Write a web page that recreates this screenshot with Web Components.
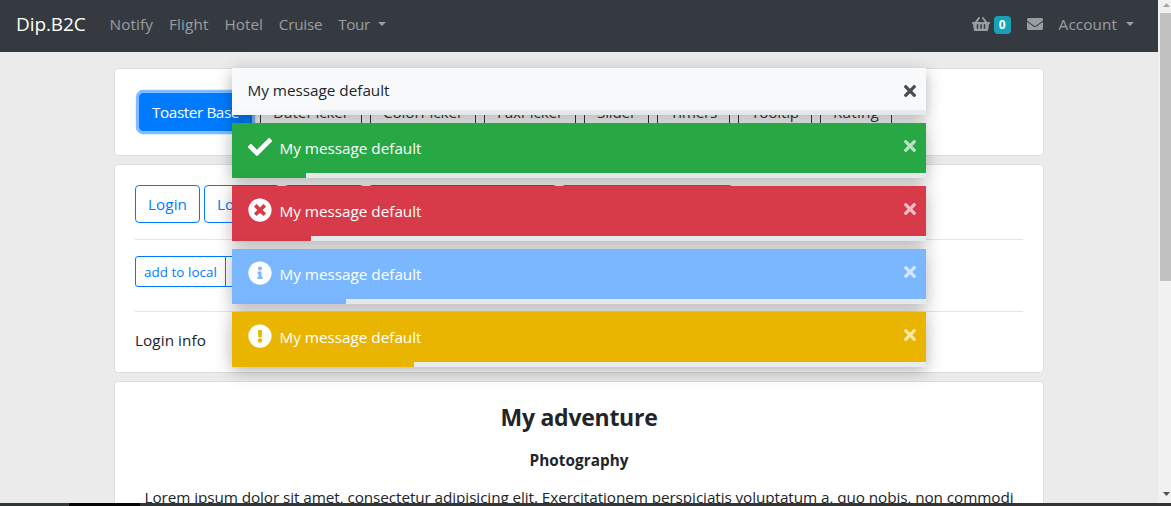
<!DOCTYPE html>
<html lang="en">
<head>
<meta charset="utf-8">
<title>Dip.B2C</title>
<style>
html,body{margin:0;height:100%;overflow:hidden}
body{font:15.3px/24px "Open Sans","Noto Sans",sans-serif;color:#212529;background:#ebebeb}
</style>
</head>
<body>
<app-shell>
  <nav-bar slot="nav">
    <fit-text slot="brand" w="69.6">Dip.B2C</fit-text>
    <nav-item><fit-text w="43.3">Notify</fit-text></nav-item>
    <nav-item><fit-text w="39.7">Flight</fit-text></nav-item>
    <nav-item><fit-text w="38.2">Hotel</fit-text></nav-item>
    <nav-item><fit-text w="43.5">Cruise</fit-text></nav-item>
    <nav-item caret><fit-text w="31.5">Tour</fit-text></nav-item>
    <nav-item slot="end"><fa-icon name="basket" style="width:18px;height:16px"></fa-icon><count-badge>0</count-badge></nav-item>
    <nav-item slot="end"><fa-icon name="envelope" style="width:16px;height:16px"></fa-icon></nav-item>
    <nav-item slot="end" caret><fit-text w="58.5">Account</fit-text></nav-item>
  </nav-bar>

  <content-card style="height:46px">
    <button-row style="--gap:8px;padding:4px">
      <ui-button variant="primary" style="width:113px"><fit-text w="87">Toaster Base</fit-text></ui-button>
      <ui-button variant="dark" style="width:102px"><fit-text w="76">DatePicker</fit-text></ui-button>
      <ui-button variant="dark" style="width:106px"><fit-text w="80">ColorPicker</fit-text></ui-button>
      <ui-button variant="dark" style="width:92px"><fit-text w="66">FaxPicker</fit-text></ui-button>
      <ui-button variant="dark" style="width:65px"><fit-text w="39">Slider</fit-text></ui-button>
      <ui-button variant="dark" style="width:73px"><fit-text w="47">Timers</fit-text></ui-button>
      <ui-button variant="dark" style="width:74px"><fit-text w="48">Tooltip</fit-text></ui-button>
      <ui-button variant="dark" style="width:72px"><fit-text w="46">Rating</fit-text></ui-button>
    </button-row>
  </content-card>

  <content-card style="height:167px">
    <button-row style="--gap:4px">
      <ui-button style="width:65px"><fit-text w="39">Login</fit-text></ui-button>
      <ui-button style="width:76px"><fit-text w="50">Logout</fit-text></ui-button>
      <ui-button style="width:80px"></ui-button>
      <ui-button style="width:189px"></ui-button>
      <ui-button variant="secondary" style="width:172px"></ui-button>
    </button-row>
    <rule-line></rule-line>
    <button-row style="--gap:0px">
      <ui-button small joined="start" style="width:91px"><fit-text w="73">add to local</fit-text></ui-button>
      <ui-button small joined="end" style="width:90px;margin-left:-1px"></ui-button>
    </button-row>
    <rule-line style="margin-top:24px"></rule-line>
    <fit-text w="71">Login info</fit-text>
  </content-card>

  <content-card style="height:300px">
    <article-block>
      <fit-text slot="title" w="157">My adventure</fit-text>
      <fit-text slot="subtitle" w="99">Photography</fit-text>
      <fit-text w="869">Lorem ipsum dolor sit amet, consectetur adipisicing elit. Exercitationem perspiciatis voluptatum a, quo nobis, non commodi</fit-text>
    </article-block>
  </content-card>

  <toast-item slot="toasts" kind="light" style="--fill:88px"><fit-text w="142">My message default</fit-text></toast-item>
  <toast-item slot="toasts" kind="success" icon="check" style="--fill:74px"><fit-text w="142">My message default</fit-text></toast-item>
  <toast-item slot="toasts" kind="danger" icon="timesCircle" style="--fill:79px"><fit-text w="142">My message default</fit-text></toast-item>
  <toast-item slot="toasts" kind="info" icon="infoCircle" style="--fill:114px"><fit-text w="142">My message default</fit-text></toast-item>
  <toast-item slot="toasts" kind="warning" icon="exclamationCircle" style="--fill:182px"><fit-text w="142">My message default</fit-text></toast-item>
</app-shell>

<script>
const define = (name, html, ready) => {
  const template = document.createElement('template');
  template.innerHTML = html;
  customElements.define(name, class extends HTMLElement {
    constructor() {
      super();
      this.attachShadow({mode: 'open'}).append(template.content.cloneNode(true));
    }
    connectedCallback() { if (ready) ready(this, this.shadowRoot); }
  });
};

const ICONS = {
  check: ['0 0 512 512', 'M173.898 439.404l-166.4-166.4c-9.997-9.997-9.997-26.206 0-36.204l36.203-36.204c9.997-9.998 26.207-9.998 36.204 0L192 312.69 432.095 72.596c9.997-9.997 26.207-9.997 36.204 0l36.203 36.204c9.997 9.997 9.997 26.206 0 36.204l-294.4 294.401c-9.998 9.997-26.207 9.997-36.204-.001z'],
  timesCircle: ['0 0 512 512', 'M256 8C119 8 8 119 8 256s111 248 248 248 248-111 248-248S393 8 256 8zm121.6 313.1c4.7 4.7 4.7 12.3 0 17L338 377.6c-4.7 4.7-12.3 4.7-17 0L256 312l-65.1 65.6c-4.7 4.7-12.3 4.7-17 0L134.4 338c-4.7-4.7-4.7-12.3 0-17l65.6-65-65.6-65.1c-4.7-4.7-4.7-12.3 0-17l39.6-39.6c4.7-4.7 12.3-4.7 17 0l65 65.7 65.1-65.6c4.7-4.7 12.3-4.7 17 0l39.6 39.6c4.7 4.7 4.7 12.3 0 17L312 256l65.6 65.1z'],
  infoCircle: ['0 0 512 512', 'M256 8C119.043 8 8 119.083 8 256c0 136.997 111.043 248 248 248s248-111.003 248-248C504 119.083 392.957 8 256 8zm0 110c23.196 0 42 18.804 42 42s-18.804 42-42 42-42-18.804-42-42 18.804-42 42-42zm56 254c0 6.627-5.373 12-12 12h-88c-6.627 0-12-5.373-12-12v-24c0-6.627 5.373-12 12-12h12v-64h-12c-6.627 0-12-5.373-12-12v-24c0-6.627 5.373-12 12-12h64c6.627 0 12 5.373 12 12v100h12c6.627 0 12 5.373 12 12v24z'],
  exclamationCircle: ['0 0 512 512', 'M504 256c0 136.997-111.043 248-248 248S8 392.997 8 256C8 119.083 119.043 8 256 8s248 111.083 248 248zm-248 50c-25.405 0-46 20.595-46 46s20.595 46 46 46 46-20.595 46-46-20.595-46-46-46zm-43.673-165.346l7.418 136c.347 6.364 5.609 11.346 11.982 11.346h48.546c6.373 0 11.635-4.982 11.982-11.346l7.418-136c.375-6.874-5.098-12.654-11.982-12.654h-63.383c-6.884 0-12.356 5.78-11.981 12.654z'],
  times: ['0 80 352 352', 'M242.72 256l100.07-100.07c12.28-12.28 12.28-32.19 0-44.48l-22.24-22.24c-12.28-12.28-32.19-12.28-44.48 0L176 189.28 75.93 89.21c-12.28-12.28-32.19-12.28-44.48 0L9.21 111.45c-12.28 12.28-12.28 32.19 0 44.48L109.28 256 9.21 356.07c-12.28 12.28-12.28 32.19 0 44.48l22.24 22.24c12.28 12.28 32.2 12.28 44.48 0L176 322.72l100.07 100.07c12.28 12.28 32.2 12.28 44.48 0l22.24-22.24c12.28-12.28 12.28-32.19 0-44.48L242.72 256z'],
  envelope: ['0 0 512 512', 'M502.3 190.8c3.9-3.1 9.7-.2 9.7 4.7V400c0 26.5-21.5 48-48 48H48c-26.5 0-48-21.5-48-48V195.6c0-5 5.7-7.8 9.7-4.7 22.4 17.4 52.1 39.5 154.1 113.6 21.1 15.4 56.7 47.8 92.2 47.6 35.7.3 72-32.8 92.3-47.6 102-74.1 131.6-96.3 154-113.7zM256 320c23.2.4 56.6-29.2 73.4-41.4 132.7-96.3 142.8-104.7 173.4-128.7 5.8-4.5 9.2-11.5 9.2-18.9v-19c0-26.5-21.5-48-48-48H48c-26.5 0-48 21.5-48 48v19c0 7.4 3.4 14.3 9.2 18.9 30.6 23.9 40.7 32.4 173.4 128.7 16.8 12.2 50.2 41.8 73.4 41.4z'],
  basket: ['0 0 576 512', 'M576 216v16c0 13.255-10.745 24-24 24h-8l-26.113 182.788C514.509 462.435 494.257 480 470.37 480H105.63c-23.887 0-44.139-17.565-47.518-41.212L32 256h-8c-13.255 0-24-10.745-24-24v-16c0-13.255 10.745-24 24-24h67.341l106.78-146.821c10.395-14.292 30.407-17.453 44.701-7.058 14.293 10.395 17.453 30.408 7.058 44.701L170.477 192h235.046L326.12 82.821c-10.395-14.292-7.234-34.306 7.059-44.701 14.291-10.395 34.306-7.235 44.701 7.058L484.659 192H552c13.255 0 24 10.745 24 24zM312 392V280c0-13.255-10.745-24-24-24s-24 10.745-24 24v112c0 13.255 10.745 24 24 24s24-10.745 24-24zm112 0V280c0-13.255-10.745-24-24-24s-24 10.745-24 24v112c0 13.255 10.745 24 24 24s24-10.745 24-24zm-224 0V280c0-13.255-10.745-24-24-24s-24 10.745-24 24v112c0 13.255 10.745 24 24 24s24-10.745 24-24z']
};

define('app-shell', `
<style>
:host{display:grid;grid-template-columns:1fr 13px;grid-template-rows:503px 3px;height:506px;position:relative;overflow:hidden}
.view{overflow:hidden;position:relative}
main{width:930px;margin:16px 0 0 114px;display:flex;flex-direction:column;gap:8px}
.toasts{position:absolute;left:232px;top:68px;width:694px;display:flex;flex-direction:column;gap:8px}
.edge{grid-column:1/3;background:linear-gradient(90deg,#333637 69px,#060606 69px 140px,#333637 140px 500px,#353233)}
</style>
<div class="view"><slot name="nav"></slot><main><slot></slot></main><div class="toasts"><slot name="toasts"></slot></div></div>
<scroll-track></scroll-track><div class="edge"></div>`);

define('scroll-track', `
<style>
:host{display:flex;flex-direction:column;background:#f1f1f1;padding-left:2px}
svg{display:block;width:11px}
.thumb{height:268px;background:#c1c1c1}
.rest{flex:1}
</style>
<svg height="13" viewBox="0 0 11 13"><path d="M3 7L6.5 3.2L10 7z" fill="#a3a3a3"/></svg>
<div class="thumb"></div><div class="rest"></div>
<svg height="13" viewBox="0 0 11 13"><path d="M3 2L6.5 6L10 2z" fill="#505050"/></svg>`);

define('nav-bar', `
<style>
:host{display:flex;align-items:center;height:52px;box-sizing:border-box;padding:0 16px 4px;background:#343a40;color:rgba(255,255,255,.5)}
.brand{color:#fff;font-size:19px;line-height:30px;margin-right:16px}
.group{display:flex}
.end{margin-left:auto}
</style>
<div class="brand"><slot name="brand"></slot></div>
<div class="group"><slot></slot></div><div class="group end"><slot name="end"></slot></div>`);

define('nav-item', `
<style>
:host{display:flex;align-items:center;padding:0 8px;height:40px}
i{display:none;margin-left:8.5px;border:4.8px solid transparent;border-top-color:currentColor;border-bottom:0;margin-top:-1px}
:host([caret]) i{display:block}
:host([caret][slot=end]){padding-right:8.4px}
</style><slot></slot><i></i>`);

define('count-badge', `
<style>
:host{display:block;width:17px;height:18px;margin:2px 0 0 4px;border-radius:4px;background:#17a2b8;color:#fff;font-size:12px;font-weight:700;line-height:18px;text-align:center}
</style><slot></slot>`);

define('fa-icon', `
<style>:host{display:block}svg{display:block;width:100%;height:100%}</style><svg><path fill="currentColor"/></svg>`,
(el, root) => {
  const icon = ICONS[el.getAttribute('name')];
  if (!icon) return;
  root.querySelector('svg').setAttribute('viewBox', icon[0]);
  root.querySelector('path').setAttribute('d', icon[1]);
});

define('content-card', `
<style>:host{display:block;padding:20px;border:1px solid #dedede;border-radius:4px;background:#fff}</style><slot></slot>`);

define('button-row', `<style>:host{display:flex;gap:var(--gap)}</style><slot></slot>`);

define('ui-button', `
<style>
:host{display:flex;align-items:center;justify-content:center;box-sizing:border-box;flex:none;height:38px;border:1px solid;border-radius:4px;color:#007bff}
:host([variant=primary]){background:#007bff;border-color:#007bff;color:#fff;box-shadow:0 0 0 3.2px #80bdff}
:host([variant=dark]){color:#343a40}
:host([variant=secondary]){color:#6c757d}
:host([small]){height:31px;font-size:13.4px}
:host([joined=start]){border-radius:3px 0 0 3px}
:host([joined=end]){border-radius:0 3px 3px 0}
</style><slot></slot>`);

define('rule-line', `<style>:host{display:block;height:1px;margin:16px 0;background:#e5e5e5}</style>`);

define('article-block', `
<style>
:host{display:block;text-align:center}
.title{font-size:23px;font-weight:700;line-height:32px;margin-top:-1px}
.sub{font-weight:700;line-height:24px;margin-top:15px}
.copy{margin-top:13px;white-space:nowrap}
</style>
<div class="title"><slot name="title"></slot></div><div class="sub"><slot name="subtitle"></slot></div><div class="copy"><slot></slot></div>`);

define('toast-item', `
<style>
:host{display:block;height:55px;box-shadow:0 4px 16px rgba(0,0,0,.3);color:#fff;--bg:#28a745}
:host([kind=light]){height:47px;color:#212529;--bg:#f8f9fa}
:host([kind=danger]){--bg:#d73a49}
:host([kind=info]){--bg:#7ab7ff}
:host([kind=warning]){--bg:#e9b500}
.body{display:flex;align-items:flex-start;height:50px;background:var(--bg);padding:0 10px 0 16px;box-sizing:border-box}
:host([kind=light]) .body{height:42px}
.icon{width:24px;height:24px;margin:12px 8px 0 0}
:host([kind=light]) .icon{display:none}
.text{margin:13px 0 0 -.5px}
:host([kind=light]) .text{margin-top:10px}
.close{width:12px;height:12px;margin:17px 0 0 auto;opacity:.68}
:host([kind=light]) .close{opacity:.8;color:#212121}
.bar{height:5px;background:#e9ecef}
.bar div{height:5px;width:var(--fill);background:var(--bg)}
</style>
<div class="body"><fa-icon class="icon"></fa-icon><div class="text"><slot></slot></div><fa-icon class="close" name="times"></fa-icon></div>
<div class="bar"><div></div></div>`,
(el, root) => {
  const name = el.getAttribute('icon');
  if (!name) return;
  const icon = document.createElement('fa-icon');
  icon.className = 'icon';
  icon.setAttribute('name', name);
  root.querySelector('.icon').replaceWith(icon);
});

/* One-line label whose tracking is adjusted so that it fills the width in its w attribute. */
define('fit-text', `
<style>:host{display:inline-block;white-space:nowrap;vertical-align:top}span{display:inline-block}</style><span><slot></slot></span>`,
(el, root) => queueMicrotask(() => {
  const span = root.querySelector('span');
  const target = parseFloat(el.getAttribute('w'));
  const natural = span.getBoundingClientRect().width;
  if (!natural) return;
  span.style.letterSpacing = (target - natural) / el.textContent.length + 'px';
}));
</script>
</body>
</html>
